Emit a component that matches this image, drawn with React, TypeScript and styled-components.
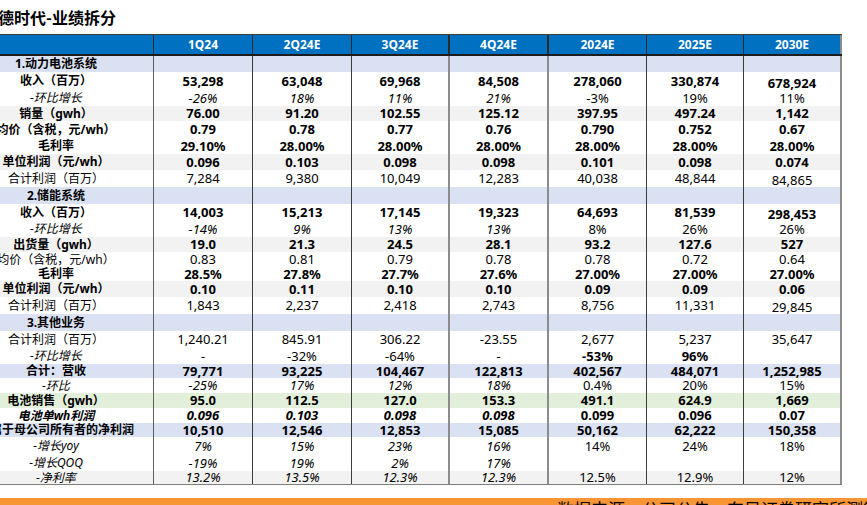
import * as React from 'react';
import styled, { createGlobalStyle } from 'styled-components';

const GlobalStyle = createGlobalStyle`
    html, body {
        margin: 0;
        padding: 0;
        background: #fff;
        overflow: hidden;
    }
    body {
        font-family: "Noto Sans", "Noto Sans CJK SC", sans-serif;
        color: #000;
    }
`;

const COLS = '194px 99px 99px 97px 99px 99px 97px 99px';
// left edge of each data column: [width, colour]
const EDGES: [number, string][] = [
    [1, '#5f5f5f'], [1, '#3c3c3c'], [1, '#3c3c3c'], [2, '#8c8c8c'],
    [2, '#8c8c8c'], [1, '#3c3c3c'], [1, '#3c3c3c'],
];
const BG: { [k: string]: string } = {
    sec: '#d9e1f2',
    gray: '#f2f2f2',
    green: '#e2efda',
    none: '#fff',
};

const Page = styled.div`
    width: 867px;
    height: 505px;
    overflow: hidden;
    display: flex;
    flex-direction: column;
`;

const TitleBar = styled.div`
    flex-shrink: 0;
    height: 34px;
    display: flex;
    align-items: center;
    padding-bottom: 1px;
    box-sizing: border-box;
`;

const Title = styled.h1`
    margin: 0 0 0 -18px;
    font-family: "Noto Sans CJK SC", sans-serif;
    font-size: 16px;
    font-weight: 700;
    line-height: 1;
    white-space: nowrap;
`;

const Table = styled.div`
    flex-shrink: 0;
    margin-left: -41px;
    width: 883px;
    border-bottom: 1px solid #7f7f7f;
`;

const HeadRow = styled.div`
    display: grid;
    grid-template-columns: ${COLS};
    height: 22px;
    box-sizing: border-box;
    border-top: 1px solid #404040;
    border-bottom: 2px solid #1c1c1c;
    background: #0070c0;
`;

const HeadCell = styled.div<{ $edge?: [number, string]; $last?: boolean }>`
    display: flex;
    align-items: center;
    justify-content: center;
    color: #fff;
    font-size: 12px;
    font-weight: 700;
    box-sizing: border-box;
    border-left: ${p => (p.$edge ? `${p.$edge[0]}px solid #2a2a2a` : 'none')};
    border-right: ${p => (p.$last ? '2px solid #8c8c8c' : 'none')};
`;

const Row = styled.div<{ $h: number; $bg: string }>`
    display: grid;
    grid-template-columns: ${COLS};
    height: ${p => p.$h}px;
    background: ${p => BG[p.$bg]};
`;

const Label = styled.div<{ $bold?: boolean; $italic?: boolean }>`
    display: flex;
    align-items: center;
    justify-content: center;
    white-space: nowrap;
    font-size: 12px;
    font-weight: ${p => (p.$bold ? 700 : 400)};
    font-style: ${p => (p.$italic ? 'italic' : 'normal')};
    line-height: 1;
`;

const Value = styled.div<{
    $bold?: boolean;
    $italic?: boolean;
    $low?: boolean;
    $edge: [number, string];
    $last?: boolean;
}>`
    display: flex;
    align-items: center;
    justify-content: center;
    box-sizing: border-box;
    padding-top: ${p => (p.$low ? '4px' : '0')};
    border-left: ${p => `${p.$edge[0]}px solid ${p.$edge[1]}`};
    border-right: ${p => (p.$last ? '2px solid #8c8c8c' : 'none')};
    font-size: 13px;
    font-weight: ${p => (p.$bold ? 700 : 400)};
    font-style: ${p => (p.$italic ? 'italic' : 'normal')};
    line-height: 1;
    white-space: nowrap;
`;

const Footer = styled.div`
    flex-shrink: 0;
    margin-top: 13px;
    height: 24px;
    background: #f79433;
    padding: 1px 0 0 557px;
    box-sizing: border-box;
    font-family: "Noto Sans CJK SC", sans-serif;
    font-size: 17px;
    line-height: 1.2;
    white-space: nowrap;
`;

// style codes per cell: b bold, i italic, x bold italic, n normal, l normal lowered, L bold lowered
interface RowData {
    label: string;
    h: number;
    bg: string;
    ls: string;
    v: string[];
    s: string;
}

const E = ['', '', '', '', '', '', ''];

const rows: RowData[] = [
    { label: '1.动力电池系统', h: 16, bg: 'sec', ls: 'b', v: E, s: 'nnnnnnn' },
    { label: '收入（百万）', h: 18, bg: 'none', ls: 'b', v: ['53,298', '63,048', '69,968', '84,508', '278,060', '330,874', '678,924'], s: 'bbbbbbL' },
    { label: '-环比增长', h: 16, bg: 'none', ls: 'i', v: ['-26%', '18%', '11%', '21%', '-3%', '19%', '11%'], s: 'iiiinnn' },
    { label: '销量（gwh）', h: 15, bg: 'gray', ls: 'b', v: ['76.00', '91.20', '102.55', '125.12', '397.95', '497.24', '1,142'], s: 'bbbbbbb' },
    { label: '均价（含税，元/wh）', h: 17, bg: 'none', ls: 'b', v: ['0.79', '0.78', '0.77', '0.76', '0.790', '0.752', '0.67'], s: 'bbbbbbb' },
    { label: '毛利率', h: 16, bg: 'none', ls: 'b', v: ['29.10%', '28.00%', '28.00%', '28.00%', '28.00%', '28.00%', '28.00%'], s: 'bbbbbbb' },
    { label: '单位利润（元/wh）', h: 16, bg: 'gray', ls: 'b', v: ['0.096', '0.103', '0.098', '0.098', '0.101', '0.098', '0.074'], s: 'bbbbbbb' },
    { label: '合计利润（百万）', h: 17, bg: 'none', ls: 'n', v: ['7,284', '9,380', '10,049', '12,283', '40,038', '48,844', '84,865'], s: 'nnnnnnl' },
    { label: '2.储能系统', h: 17, bg: 'sec', ls: 'b', v: E, s: 'nnnnnnn' },
    { label: '收入（百万）', h: 17, bg: 'none', ls: 'b', v: ['14,003', '15,213', '17,145', '19,323', '64,693', '81,539', '298,453'], s: 'bbbbbbL' },
    { label: '-环比增长', h: 16, bg: 'none', ls: 'i', v: ['-14%', '9%', '13%', '13%', '8%', '26%', '26%'], s: 'iiiinnn' },
    { label: '出货量（gwh）', h: 15, bg: 'gray', ls: 'b', v: ['19.0', '21.3', '24.5', '28.1', '93.2', '127.6', '527'], s: 'bbbbbbb' },
    { label: '均价（含税，元/wh）', h: 15, bg: 'none', ls: 'n', v: ['0.83', '0.81', '0.79', '0.78', '0.78', '0.72', '0.64'], s: 'nnnnnnn' },
    { label: '毛利率', h: 14, bg: 'none', ls: 'b', v: ['28.5%', '27.8%', '27.7%', '27.6%', '27.00%', '27.00%', '27.00%'], s: 'bbbbbbb' },
    { label: '单位利润（元/wh）', h: 16, bg: 'gray', ls: 'b', v: ['0.10', '0.11', '0.10', '0.10', '0.09', '0.09', '0.06'], s: 'bbbbbbb' },
    { label: '合计利润（百万）', h: 17, bg: 'none', ls: 'n', v: ['1,843', '2,237', '2,418', '2,743', '8,756', '11,331', '29,845'], s: 'nnnnnnl' },
    { label: '3.其他业务', h: 17, bg: 'sec', ls: 'b', v: E, s: 'nnnnnnn' },
    { label: '合计利润（百万）', h: 17, bg: 'none', ls: 'n', v: ['1,240.21', '845.91', '306.22', '-23.55', '2,677', '5,237', '35,647'], s: 'nnnnnnn' },
    { label: '-环比增长', h: 16, bg: 'none', ls: 'i', v: ['-', '-32%', '-64%', '-', '-53%', '96%', ''], s: 'nnnnbbn' },
    { label: '合计：营收', h: 14, bg: 'sec', ls: 'b', v: ['79,771', '93,225', '104,467', '122,813', '402,567', '484,071', '1,252,985'], s: 'bbbbbbb' },
    { label: '-环比', h: 15, bg: 'none', ls: 'i', v: ['-25%', '17%', '12%', '18%', '0.4%', '20%', '15%'], s: 'iiiinnn' },
    { label: '电池销售（gwh）', h: 15, bg: 'green', ls: 'b', v: ['95.0', '112.5', '127.0', '153.3', '491.1', '624.9', '1,669'], s: 'bbbbbbb' },
    { label: '电池单wh利润', h: 15, bg: 'none', ls: 'x', v: ['0.096', '0.103', '0.098', '0.098', '0.099', '0.096', '0.07'], s: 'xxxxbbb' },
    { label: '归属于母公司所有者的净利润', h: 14, bg: 'sec', ls: 'b', v: ['10,510', '12,546', '12,853', '15,085', '50,162', '62,222', '150,358'], s: 'bbbbbbb' },
    { label: '-增长yoy', h: 18, bg: 'none', ls: 'i', v: ['7%', '15%', '23%', '16%', '14%', '24%', '18%'], s: 'iiiinnn' },
    { label: '-增长QOQ', h: 16, bg: 'none', ls: 'i', v: ['-19%', '19%', '2%', '17%', '', '', ''], s: 'iiiinnn' },
    { label: '-净利率', h: 13, bg: 'gray', ls: 'i', v: ['13.2%', '13.5%', '12.3%', '12.3%', '12.5%', '12.9%', '12%'], s: 'iiiinnn' },
];

const heads = ['1Q24', '2Q24E', '3Q24E', '4Q24E', '2024E', '2025E', '2030E'];

const isBold = (c: string) => c === 'b' || c === 'x' || c === 'L';
const isItalic = (c: string) => c === 'i' || c === 'x';
const isLow = (c: string) => c === 'l' || c === 'L';

const App: React.FC = () => {
    return (
        <Page>
            <GlobalStyle />
            <TitleBar>
                <Title>宁德时代-业绩拆分</Title>
            </TitleBar>
            <Table>
                <HeadRow>
                    <HeadCell />
                    {heads.map((h, i) => (
                        <HeadCell key={h} $edge={EDGES[i]} $last={i === heads.length - 1}>
                            {h}
                        </HeadCell>
                    ))}
                </HeadRow>
                {rows.map((r, ri) => (
                    <Row key={ri} $h={r.h} $bg={r.bg}>
                        <Label $bold={isBold(r.ls)} $italic={isItalic(r.ls)}>{r.label}</Label>
                        {r.v.map((val, ci) => {
                            const c = r.s[ci];
                            return (
                                <Value
                                    key={ci}
                                    $bold={isBold(c)}
                                    $italic={isItalic(c)}
                                    $low={isLow(c)}
                                    $edge={EDGES[ci]}
                                    $last={ci === 6}
                                >
                                    {val}
                                </Value>
                            );
                        })}
                    </Row>
                ))}
            </Table>
            <Footer>数据来源：公司公告，东吴证券研究所测算</Footer>
        </Page>
    );
};

export default App;
